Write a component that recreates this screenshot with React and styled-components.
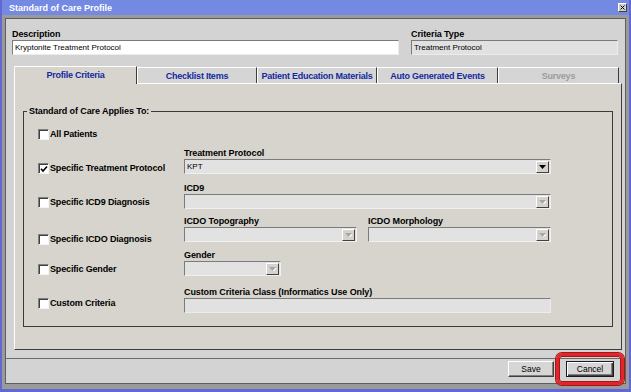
import React from "react";
import styled, { createGlobalStyle, css } from "styled-components";

const GlobalStyle = createGlobalStyle`
  html, body {
    margin: 0;
    padding: 0;
  }
  body {
    font-family: "Liberation Sans", Arial, sans-serif;
    background: #6167d0;
  }
`;

const Window = styled.div`
  width: 631px;
  height: 392px;
  box-sizing: border-box;
  background: #6268d2;
  padding: 0 2px 3px 2px;
  display: flex;
  flex-direction: column;
`;
const TitleBar = styled.div`
  height: 15px;
  flex: none;
  display: flex;
  align-items: center;
  justify-content: space-between;
  padding: 0 2px 0 7px;
  background: #7389e2;
  color: #fff;
  font-size: 9px;
  font-weight: bold;
`;
const CloseBox = styled.div`
  width: 9px;
  height: 9px;
  box-sizing: border-box;
  background: #d4d0c8;
  border: 1px solid;
  border-color: #fff #404040 #404040 #fff;
  display: flex;
  align-items: center;
  justify-content: center;
`;
const Frame = styled.div`
  flex: 1;
  min-height: 0;
  display: flex;
  background: #9a9a9a;
  padding: 3px 3px 5px 3px;
`;
const Body = styled.div`
  flex: 1;
  display: flex;
  flex-direction: column;
  background: #d3d3d3;
  border: 1px solid #5e5e5e;
`;
const TopFields = styled.div`
  display: grid;
  grid-template-columns: 387px 207px;
  column-gap: 12px;
  padding: 10px 0 0 6px;
`;
const Field = styled.div`
  display: flex;
  flex-direction: column;
`;
const Label = styled.div`
  font-size: 9px;
  font-weight: bold;
  line-height: 11px;
  letter-spacing: -0.1px;
  color: #000;
  white-space: nowrap;
`;
const TextBox = styled.div`
  height: 15px;
  box-sizing: border-box;
  border: 1px solid;
  border-color: #7b7b7b #ececec #ececec #7b7b7b;
  background: ${(p) => (p.$disabled ? "#e1e1e1" : "#fff")};
  font-size: 8px;
  line-height: 13px;
  padding-left: 2px;
  color: #000;
`;
const TabArea = styled.div`
  height: 284px;
  margin: 11px 3px 0 8px;
  display: flex;
  flex-direction: column;
`;
const TabStrip = styled.div`
  height: 17px;
  flex: none;
  display: flex;
  align-items: flex-end;
`;
const Tab = styled.div`
  width: ${(p) => p.$w}px;
  height: ${(p) => (p.$active ? 18 : 16)}px;
  margin-bottom: ${(p) => (p.$active ? -1 : 0)}px;
  box-sizing: border-box;
  display: flex;
  align-items: center;
  justify-content: center;
  font-size: 9px;
  font-weight: bold;
  letter-spacing: -0.25px;
  color: ${(p) => (p.$disabled ? "#9c9c9c" : "#14299e")};
  background: ${(p) => (p.$active ? "#d7d4ce" : "#d5d5d5")};
  border-top: 1px solid #fff;
  border-left: 1px solid #fff;
  border-right: 1px solid #3c3c3c;
  position: relative;
  z-index: ${(p) => (p.$active ? 1 : 0)};
  padding-bottom: ${(p) => (p.$active ? 1 : 0)}px;
`;
const Panel = styled.div`
  flex: 1;
  display: flex;
  flex-direction: column;
  background: #d7d4ce;
  border: 1px solid;
  border-color: #fff #3c3c3c #3c3c3c #fff;
`;
const GroupBox = styled.fieldset`
  margin: 21px 8px 0 8px;
  padding: 12px 0 13px 14px;
  border: 1px solid #3a3a3a;
  min-width: 0;
`;
const Legend = styled.legend`
  padding: 0 2px;
  margin-left: -11px;
  font-size: 9px;
  font-weight: bold;
  line-height: 12px;
  letter-spacing: -0.1px;
`;
const Row = styled.div`
  display: grid;
  grid-template-columns: 146px 367px;
  align-items: end;
  margin-top: ${(p) => p.$top || 0}px;
`;
const CheckCell = styled.label`
  display: flex;
  align-items: center;
  gap: 1px;
  margin-bottom: ${(p) => p.$lift || 0}px;
  font-size: 9px;
  font-weight: bold;
  line-height: 11px;
  letter-spacing: -0.15px;
  white-space: nowrap;
`;
const Box = styled.span`
  width: 11px;
  height: 11px;
  box-sizing: border-box;
  background: #fff;
  border: 1px solid;
  border-color: #808080 #f4f4f4 #f4f4f4 #808080;
  box-shadow: inset 1px 1px 0 #404040;
  display: flex;
  align-items: center;
  justify-content: center;
  flex: none;
`;
const Controls = styled.div`
  display: flex;
  gap: 11px;
`;
const Combo = styled.div`
  width: ${(p) => p.$w}px;
  height: 15px;
  box-sizing: border-box;
  display: flex;
  align-items: center;
  justify-content: space-between;
  border: 1px solid;
  border-color: #7b7b7b #f0f0f0 #f0f0f0 #7b7b7b;
  background: #e2e2e2;
  font-size: 8px;
  padding: 0 1px 0 2px;
  color: #000;
`;
const DropButton = styled.span`
  width: 13px;
  height: 12px;
  box-sizing: border-box;
  background: #d6d3ce;
  border: 1px solid;
  border-color: #fff #404040 #404040 #fff;
  display: flex;
  align-items: center;
  justify-content: center;
`;
const BottomBar = styled.div`
  height: 25px;
  box-sizing: border-box;
  margin-top: 8px;
  border-top: 1px solid #6a6a6a;
  display: flex;
  justify-content: flex-end;
  align-items: flex-start;
  gap: 12px;
  padding: 2px 11px 0 0;
`;
const PushButton = styled.button`
  width: ${(p) => p.$w}px;
  height: 16px;
  padding: 0;
  font-family: "Liberation Sans", Arial, sans-serif;
  font-size: 8.5px;
  color: #000;
  background: #d6d6d6;
  border: 1px solid;
  border-color: #fff #404040 #404040 #fff;
  box-shadow: inset -1px -1px 0 #808080;
  ${(p) =>
    p.$focused &&
    css`
      border-color: #1a1a1a;
      box-shadow: inset 1px 1px 0 #fff, inset -1px -1px 0 #404040,
        inset -2px -2px 0 #808080;
    `}
`;
const Highlight = styled.span`
  position: relative;
  display: inline-flex;
  &::after {
    content: "";
    position: absolute;
    top: -8px;
    left: -10px;
    right: -10px;
    bottom: -8px;
    border: 3px solid #e3242b;
    border-radius: 6px;
    box-shadow: 0 0 0 1px #a01818, inset 0 0 0 1px #a01818;
    pointer-events: none;
  }
`;

const Arrow = ({ disabled }) => (
  <svg width="7" height="4" viewBox="0 0 7 4">
    {disabled && <polygon points="1,1 8,1 4.5,4.5" fill="#fff" />}
    <polygon points="0,0 7,0 3.5,4" fill={disabled ? "#a6a6a6" : "#000"} />
  </svg>
);

const Select = ({ w, value, disabled }) => (
  <Combo $w={w}>
    <span>{value}</span>
    <DropButton>
      <Arrow disabled={disabled} />
    </DropButton>
  </Combo>
);

const Check = ({ checked, children, lift }) => (
  <CheckCell $lift={lift}>
    <Box>
      {checked && (
        <svg width="8" height="8" viewBox="0 0 8 8">
          <path d="M1 3.8 L3 6 L7 1.5" stroke="#000" strokeWidth="1.6" fill="none" />
        </svg>
      )}
    </Box>
    {children}
  </CheckCell>
);

const tabs = [
  { label: "Profile Criteria", w: 123, active: true },
  { label: "Checklist Items", w: 120 },
  { label: "Patient Education Materials", w: 120 },
  { label: "Auto Generated Events", w: 121 },
  { label: "Surveys", w: 121, disabled: true },
];

export default function App() {
  return (
    <>
      <GlobalStyle />
      <Window>
        <TitleBar>
          <span>Standard of Care Profile</span>
          <CloseBox>
            <svg width="5" height="5" viewBox="0 0 5 5">
              <path d="M0.5 0.5 L4.5 4.5 M4.5 0.5 L0.5 4.5" stroke="#000" strokeWidth="1" />
            </svg>
          </CloseBox>
        </TitleBar>
        <Frame>
          <Body>
            <TopFields>
              <Field>
                <Label>Description</Label>
                <TextBox>Kryptonite Treatment Protocol</TextBox>
              </Field>
              <Field>
                <Label>Criteria Type</Label>
                <TextBox $disabled>Treatment Protocol</TextBox>
              </Field>
            </TopFields>

            <TabArea>
              <TabStrip>
                {tabs.map((t) => (
                  <Tab key={t.label} $w={t.w} $active={t.active} $disabled={t.disabled}>
                    {t.label}
                  </Tab>
                ))}
              </TabStrip>
              <Panel>
                <GroupBox>
                  <Legend>Standard of Care Applies To:</Legend>
                  <Row>
                    <Check>All Patients</Check>
                  </Row>
                  <Row $top={8}>
                    <Check checked lift={0}>Specific Treatment Protocol</Check>
                    <Field>
                      <Label>Treatment Protocol</Label>
                      <Select w={367} value="KPT" />
                    </Field>
                  </Row>
                  <Row $top={9}>
                    <Check lift={1}>Specific ICD9 Diagnosis</Check>
                    <Field>
                      <Label>ICD9</Label>
                      <Select w={367} disabled />
                    </Field>
                  </Row>
                  <Row $top={7}>
                    <Check lift={-3}>Specific ICDO Diagnosis</Check>
                    <Controls>
                      <Field>
                        <Label>ICDO Topography</Label>
                        <Select w={173} disabled />
                      </Field>
                      <Field>
                        <Label>ICDO Morphology</Label>
                        <Select w={183} disabled />
                      </Field>
                    </Controls>
                  </Row>
                  <Row $top={8}>
                    <Check lift={1}>Specific Gender</Check>
                    <Field>
                      <Label>Gender</Label>
                      <Select w={97} disabled />
                    </Field>
                  </Row>
                  <Row $top={11}>
                    <Check lift={4}>Custom Criteria</Check>
                    <Field>
                      <Label>Custom Criteria Class (Informatics Use Only)</Label>
                      <TextBox $disabled />
                    </Field>
                  </Row>
                </GroupBox>
              </Panel>
            </TabArea>

            <BottomBar>
              <PushButton $w={46}>Save</PushButton>
              <Highlight>
                <PushButton $w={48} $focused>
                  Cancel
                </PushButton>
              </Highlight>
            </BottomBar>
          </Body>
        </Frame>
      </Window>
    </>
  );
}
